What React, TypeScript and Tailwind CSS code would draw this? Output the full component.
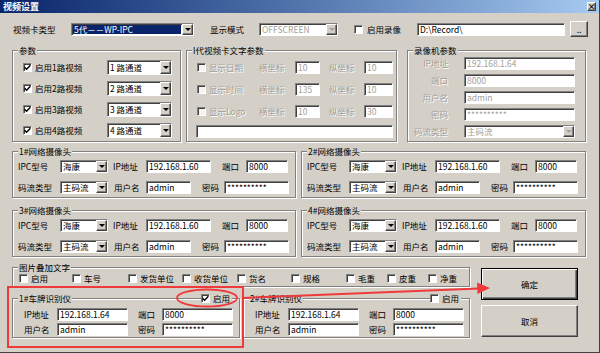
import React from "react";

const ETCH = "border border-[#808080] shadow-[inset_1px_1px_0_#fff,1px_1px_0_#fff]";
const DIS = "text-[#a39f97] [text-shadow:1px_1px_0_#fff]";
const SUNKEN =
  "border border-t-[#808080] border-l-[#808080] border-b-white border-r-white shadow-[inset_1px_1px_0_#404040]";
const RAISED =
  "border border-t-white border-l-white border-b-[#404040] border-r-[#404040] shadow-[inset_-1px_-1px_0_#808080]";

function Check({ checked, disabled }: { checked?: boolean; disabled?: boolean }) {
  return (
    <span
      className={`flex h-[9px] w-[9px] shrink-0 items-center justify-center ${SUNKEN} ${
        disabled ? "bg-[#f5f4f0]" : "bg-white"
      }`}
    >
      {checked && (
        <svg width="7" height="7" viewBox="0 0 7 7">
          <path d="M0.6 3.2 L2.6 5.2 L6.4 1.2" stroke={disabled ? "#808080" : "#000"} strokeWidth="1.4" fill="none" />
        </svg>
      )}
    </span>
  );
}

function Field({
  className,
  children,
  disabled,
}: {
  className: string;
  children?: React.ReactNode;
  disabled?: boolean;
}) {
  return (
    <div
      className={`flex h-[13px] shrink-0 items-center overflow-hidden whitespace-nowrap bg-white pl-[2px] leading-none ${SUNKEN} ${
        disabled ? "text-[#a39f97]" : ""
      } ${className}`}
    >
      {children}
    </div>
  );
}

function Arrow({ disabled }: { disabled?: boolean }) {
  return (
    <span className={`ml-auto flex h-full w-[11px] shrink-0 items-center justify-center bg-[#d4d0c8] ${RAISED}`}>
      <span
        className={`h-0 w-0 border-x-[3px] border-t-[3px] border-x-transparent ${
          disabled ? "border-t-[#a0a0a0]" : "border-t-black"
        }`}
      />
    </span>
  );
}

function Combo({
  className,
  value,
  disabled,
  selected,
}: {
  className: string;
  value: string;
  disabled?: boolean;
  selected?: boolean;
}) {
  return (
    <div
      className={`flex shrink-0 items-stretch overflow-hidden whitespace-nowrap bg-white leading-none ${SUNKEN} ${className}`}
    >
      <span
        className={`mx-[1px] my-[1px] flex flex-1 items-center pl-[1px] ${
          selected ? "bg-[#0a246a] text-white" : disabled ? "text-[#a39f97]" : ""
        }`}
      >
        {value}
      </span>
      <Arrow disabled={disabled} />
    </div>
  );
}

function Group({
  title,
  className,
  children,
  extra,
}: {
  title: string;
  className: string;
  children?: React.ReactNode;
  extra?: React.ReactNode;
}) {
  return (
    <div className={`relative shrink-0 ${ETCH} ${className}`}>
      <span className="absolute -top-[6px] left-[5px] bg-[#d4d0c8] px-[1px] leading-[10px]">{title}</span>
      {extra}
      {children}
    </div>
  );
}

function Camera({ title }: { title: string }) {
  return (
    <Group title={title} className="h-[47px]">
      <div className="flex flex-col gap-[8px] pl-[5px] pt-[8px]">
        <div className="flex h-[13px] items-center">
          <span className="w-[42px]">IPC型号</span>
          <Combo className="h-[13px] w-[48px]" value="海康" />
          <span className="ml-[5px] w-[33px]">IP地址</span>
          <Field className="w-[65px]">192.168.1.60</Field>
          <span className="ml-[11px] w-[24px]">端口</span>
          <Field className="w-[42px]">8000</Field>
        </div>
        <div className="flex h-[13px] items-center">
          <span className="w-[42px]">码流类型</span>
          <Combo className="h-[13px] w-[48px]" value="主码流" />
          <span className="ml-[6px] w-[32px]">用户名</span>
          <Field className="w-[45px]">admin</Field>
          <span className="ml-[11px] w-[22px]">密码</span>
          <Field className="w-[65px]">**********</Field>
        </div>
      </div>
    </Group>
  );
}

function Plate({ title, checked, className, checkLeft }: { title: string; checked?: boolean; className: string; checkLeft: string }) {
  return (
    <Group
      title={title}
      className={`h-[40px] ${className}`}
      extra={
        <span className={`absolute -top-[6px] flex items-center bg-[#d4d0c8] pr-[2px] leading-[10px] ${checkLeft}`}>
          <Check checked={checked} />
          <span className="ml-[3px]">启用</span>
        </span>
      }
    >
      <div className="flex flex-col gap-[3px] pl-[11px] pt-[9px]">
        <div className="flex h-[12px] items-center">
          <span className="w-[33px]">IP地址</span>
          <Field className="h-[12px] w-[71px]">192.168.1.64</Field>
          <span className="ml-[10px] w-[24px]">端口</span>
          <Field className="h-[12px] w-[71px]">8000</Field>
        </div>
        <div className="flex h-[12px] items-center">
          <span className="w-[33px]">用户名</span>
          <Field className="h-[12px] w-[71px]">admin</Field>
          <span className="ml-[10px] w-[24px]">密码</span>
          <Field className="h-[12px] w-[71px]">**********</Field>
        </div>
      </div>
    </Group>
  );
}

const overlayItems = [
  { label: "启用", w: "w-[53px]" },
  { label: "车号", w: "w-[56px]" },
  { label: "发货单位", w: "w-[54px]" },
  { label: "收货单位", w: "w-[55px]" },
  { label: "货名", w: "w-[54px]" },
  { label: "规格", w: "w-[55px]" },
  { label: "毛重", w: "w-[41px]" },
  { label: "皮重", w: "w-[41px]" },
  { label: "净重", w: "w-[41px]" },
];

export default function App() {
  return (
    <div className="relative h-[353px] w-[600px] overflow-hidden border-r border-b border-[#404040] bg-[#d4d0c8] font-['Noto_Sans_CJK_SC','Noto_Sans',sans-serif] text-[8.5px] text-black">
      {/* title bar */}
      <div className="flex h-[13px] items-center bg-gradient-to-r from-[#0a246a] to-[#a6caf0] pl-[3px] pr-[3px]">
        <span className="text-[9px] font-bold leading-none text-white">视频设置</span>
        <span
          className={`ml-auto flex h-[9px] w-[9px] items-center justify-center bg-[#d4d0c8] text-[8px] font-bold leading-none ${RAISED}`}
        >
          ×
        </span>
      </div>

      {/* card type row */}
      <div className="mt-[8px] flex h-[16px] items-center pl-[13px]">
        <span className="w-[58px]">视频卡类型</span>
        <Combo className="h-[13px] w-[123px]" value="5代－－WP-IPC" selected />
        <span className="ml-[16px] w-[49px]">显示模式</span>
        <Combo className="h-[13px] w-[79px]" value="OFFSCREEN" disabled />
        <span className="ml-[16px]">
          <Check />
        </span>
        <span className="ml-[4px] w-[50px]">启用录像</span>
        <Field className="w-[148px]">D:\Record\</Field>
        <span className={`ml-[5px] flex h-[16px] w-[18px] items-end justify-center pb-[3px] leading-none ${RAISED}`}>..</span>
      </div>

      {/* top groups */}
      <div className="mt-[13px] flex pl-[12px]">
        <Group title="参数" className="h-[92px] w-[169px]">
          <div className="flex flex-col gap-[6px] pl-[10px] pt-[9px]">
            {["1", "2", "3", "4"].map((n) => (
              <div key={n} className="flex h-[15px] items-center">
                <Check checked />
                <span className="ml-[3px] w-[72px]">启用{n}路视频</span>
                <Combo className="h-[15px] w-[65px]" value={`${n}  路通道`} />
              </div>
            ))}
          </div>
        </Group>

        <Group title="I代视频卡文字参数" className="ml-[5px] h-[92px] w-[211px]">
          <div className="flex flex-col gap-[10px] pl-[10px] pt-[10px]">
            {[
              ["显示日期", "10", "10"],
              ["显示时间", "135", "10"],
              ["显示Logo", "10", "30"],
            ].map(([label, x, y]) => (
              <div key={label} className="flex h-[12px] items-center">
                <Check disabled />
                <span className={`ml-[3px] w-[50px] ${DIS}`}>{label}</span>
                <span className={`w-[36px] ${DIS}`}>横坐标</span>
                <Field className="h-[12px] w-[25px]" disabled>
                  {x}
                </Field>
                <span className={`ml-[9px] w-[35px] ${DIS}`}>纵坐标</span>
                <Field className="h-[12px] w-[29px]" disabled>
                  {y}
                </Field>
              </div>
            ))}
          </div>
          <div className="mt-[8px] pl-[9px]">
            <Field className="w-[197px]" />
          </div>
        </Group>

        <Group title="录像机参数" className="ml-[10px] h-[92px] w-[179px]">
          <div className="flex flex-col gap-[4px] pt-[6px]">
            {[
              ["IP地址", "192.168.1.64"],
              ["端口", "8000"],
              ["用户名", "admin"],
              ["密码", "**********"],
            ].map(([label, value]) => (
              <div key={label} className="flex h-[13px] items-center">
                <span className={`w-[40px] text-right ${DIS}`}>{label}</span>
                <Field className="ml-[16px] w-[111px]" disabled>
                  {value}
                </Field>
              </div>
            ))}
            <div className="flex h-[13px] items-center">
              <span className={`w-[40px] text-right ${DIS}`}>码流类型</span>
              <Combo className="ml-[16px] h-[13px] w-[111px]" value="主码流" disabled />
            </div>
          </div>
        </Group>
      </div>

      {/* network cameras */}
      <div className="mt-[9px] grid grid-cols-[284px_285px] gap-x-[5px] gap-y-[12px] pl-[12px]">
        <Camera title="1#网络摄像头" />
        <Camera title="2#网络摄像头" />
        <Camera title="3#网络摄像头" />
        <Camera title="4#网络摄像头" />
      </div>

      {/* bottom */}
      <div className="mt-[10px] flex pl-[12px]">
        <div className="w-[458px]">
          <Group title="图片叠加文字" className="h-[20px] w-[458px]">
            <div className="pl-[6px] pt-[6px]">
              <div className="flex h-[9px] items-center leading-none">
                {overlayItems.map((it) => (
                  <span key={it.label} className={`flex shrink-0 items-center ${it.w}`}>
                    <Check />
                    <span className="ml-[3px]">{it.label}</span>
                  </span>
                ))}
              </div>
            </div>
          </Group>
          <div className="mt-[11px] flex gap-[3px]">
            <Plate title="1#车牌识别仪" checked className="w-[228px]" checkLeft="left-[188px]" />
            <Plate title="2#车牌识别仪" className="w-[227px]" checkLeft="left-[186px]" />
          </div>
        </div>
        <div className="ml-[11px] mt-[1px] flex flex-col gap-[5px]">
          <button className="flex h-[32px] w-[97px] items-center justify-center border border-black bg-[#d4d0c8] shadow-[inset_1px_1px_0_#fff,inset_-1px_-1px_0_#404040,inset_-2px_-2px_0_#808080]">
            确定
          </button>
          <button className={`flex h-[32px] w-[97px] items-center justify-center bg-[#d4d0c8] ${RAISED}`}>取消</button>
        </div>
      </div>

      {/* red annotations */}
      <svg className="pointer-events-none absolute left-0 top-0" width="600" height="353">
        <rect x="8" y="287" width="235" height="60" fill="none" stroke="#ee3a3a" strokeWidth="2" />
        <ellipse cx="207" cy="298" rx="30" ry="8.5" fill="none" stroke="#ee3a3a" strokeWidth="1.8" />
        <line x1="243" y1="298" x2="479" y2="288.4" stroke="#ee3a3a" strokeWidth="2" />
        <polygon points="477,282.5 490,288 477.5,294" fill="#ee3a3a" />
      </svg>
    </div>
  );
}
